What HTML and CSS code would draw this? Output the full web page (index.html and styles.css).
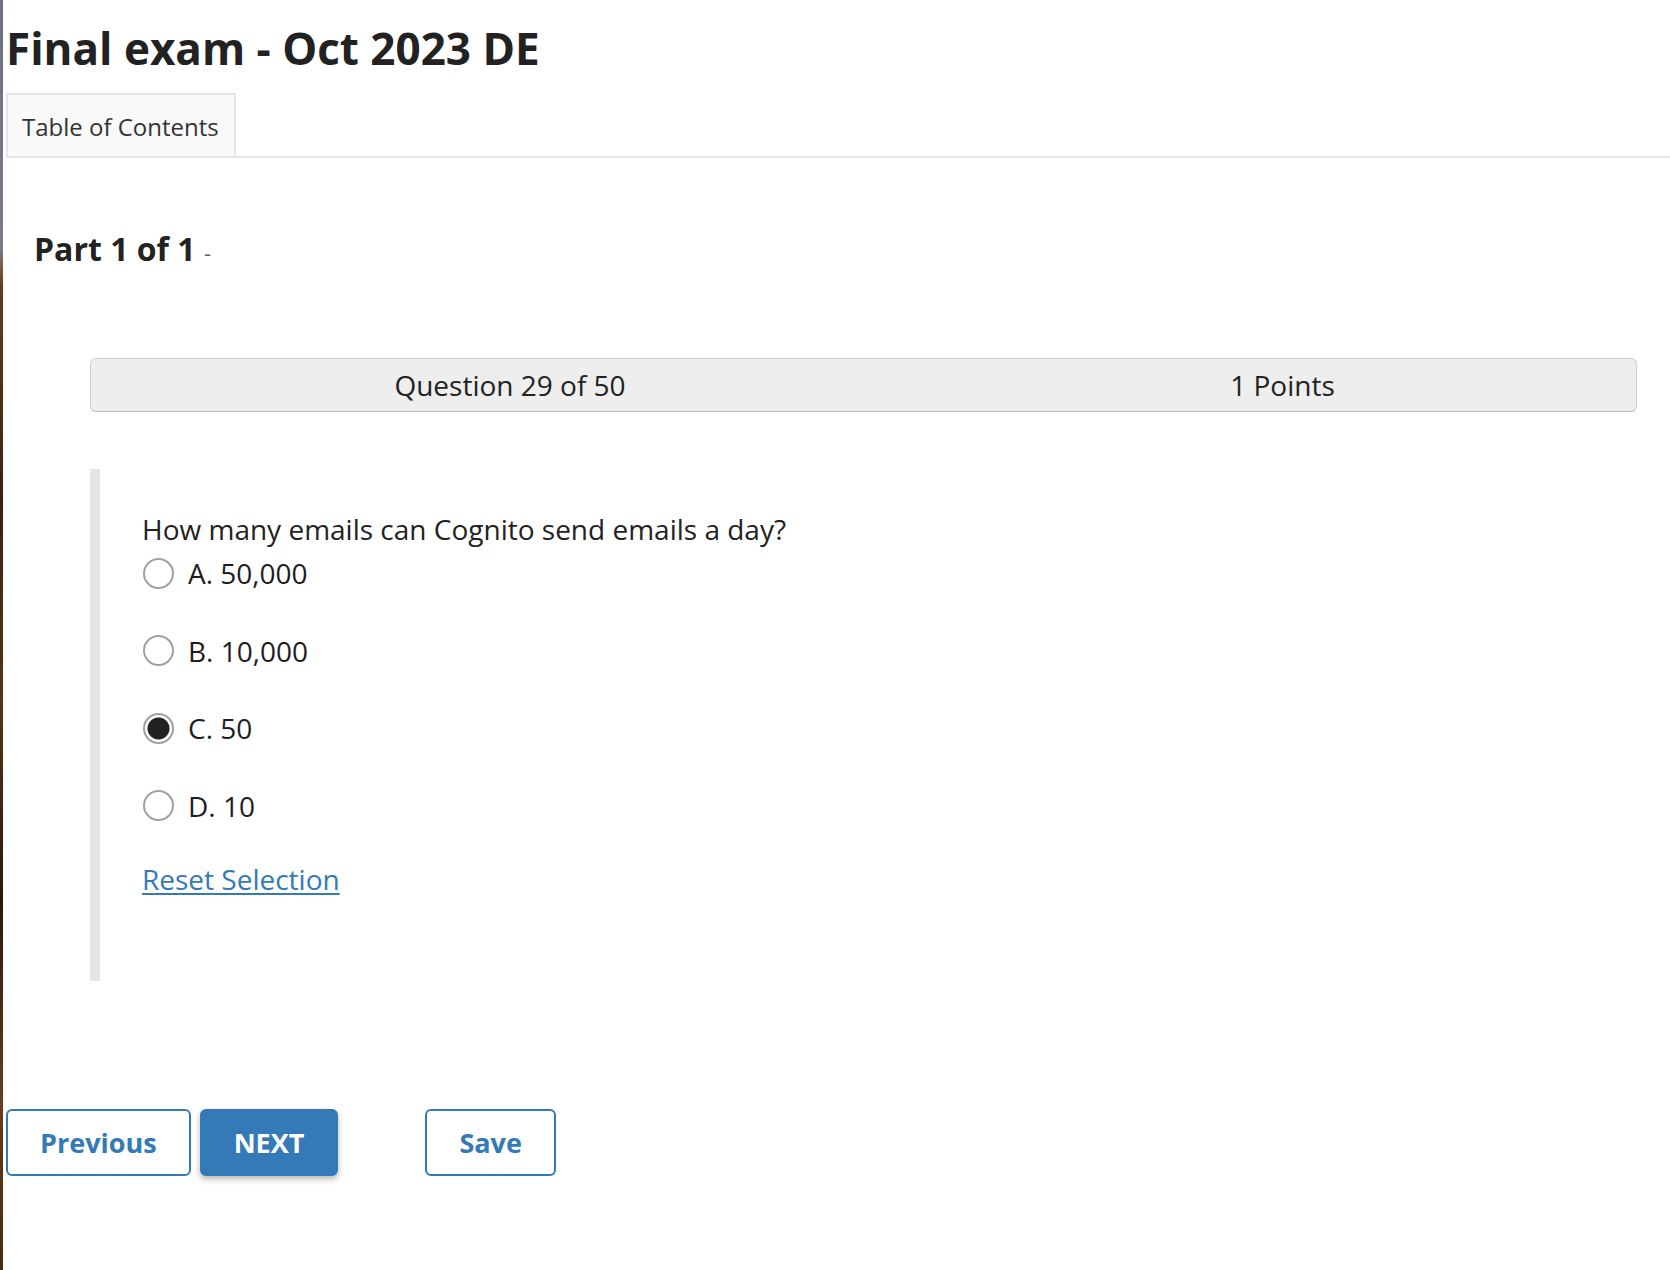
FILE: index.html
```html
<!DOCTYPE html>
<html lang="en">
<head>
<meta charset="utf-8">
<title>Final exam - Oct 2023 DE</title>
<link rel="stylesheet" href="styles.css">
</head>
<body>
<div class="desk-edge"></div>
<main class="page">
  <h1 class="exam-title">Final exam - Oct 2023 DE</h1>
  <nav class="tabs">
    <div class="tab">Table of Contents</div>
  </nav>
  <h2 class="part-title">Part 1 of 1 <span class="part-dash">-</span></h2>
  <div class="q-header">
    <div class="q-header-cell">Question 29 of 50</div>
    <div class="q-header-cell">1 Points</div>
  </div>
  <section class="q-block">
    <p class="q-text">How many emails can Cognito send emails a day?</p>
    <div class="options">
      <label class="option"><input class="radio" type="radio" name="q29"><span class="opt-label">A. 50,000</span></label>
      <label class="option"><input class="radio" type="radio" name="q29"><span class="opt-label">B. 10,000</span></label>
      <label class="option"><input class="radio" type="radio" name="q29" checked><span class="opt-label">C. 50</span></label>
      <label class="option"><input class="radio" type="radio" name="q29"><span class="opt-label">D. 10</span></label>
    </div>
    <a class="reset-link" href="#">Reset Selection</a>
  </section>
  <div class="nav-buttons">
    <button class="btn btn-outline" type="button">Previous</button>
    <button class="btn btn-primary" type="button">NEXT</button>
    <button class="btn btn-outline btn-save" type="button">Save</button>
  </div>
</main>
</body>
</html>
```
FILE: styles.css
```css
html, body {
  margin: 0;
  padding: 0;
  background: #ffffff;
}
body {
  display: flex;
  min-height: 1270px;
  font-family: "Open Sans", "Liberation Sans", sans-serif;
  color: #222222;
}
.desk-edge {
  width: 3px;
  flex: 0 0 3px;
  background: linear-gradient(to bottom, #6c7283 0, #777b8a 250px, #7a5a45 268px, #6a3a1c 285px, #3c2010 500px, #5a3218 700px, #2a160a 900px, #6a3c1e 1100px, #4a2812 1270px);
}
.page {
  flex: 1;
  padding-left: 3px;
  display: flex;
  flex-direction: column;
}
.exam-title {
  margin: 20px 0 0 0;
  font-size: 44px;
  line-height: 56px;
  font-weight: 700;
  color: #222222;
}
.tabs {
  margin-top: 17px;
  display: flex;
  border-bottom: 2px solid #e6e6e6;
}
.tab {
  border: 2px solid #e6e6e6;
  border-bottom: 0;
  background: #f9f9f9;
  padding: 16px 15px 13px 14px;
  font-size: 24px;
  line-height: 32px;
  color: #333333;
}
.part-title {
  margin: 71px 0 0 0;
  padding-left: 28px;
  font-size: 32px;
  line-height: 40px;
  font-weight: 700;
  color: #222222;
}
.part-dash {
  font-size: 22px;
  font-weight: 400;
  color: #666666;
}
.q-header {
  margin: 86px 33px 0 84px;
  height: 54px;
  box-sizing: border-box;
  border: 1px solid #cfcfcf;
  border-bottom-color: #bdbdbd;
  border-radius: 6px;
  background: #eeeeee;
  display: grid;
  grid-template-columns: 838px 1fr;
  font-size: 28px;
  line-height: 52px;
  color: #222222;
}
.q-header-cell {
  text-align: center;
}
.q-block {
  margin: 57px 0 0 84px;
  border-left: 10px solid #e5e5e5;
  padding: 40px 0 82px 42px;
  display: flex;
  flex-direction: column;
  align-items: flex-start;
  font-size: 28px;
  line-height: 40px;
}
.q-text {
  margin: 0;
}
.options {
  margin-top: 4px;
  display: flex;
  flex-direction: column;
  gap: 37.5px;
}
.option {
  display: flex;
  align-items: center;
  height: 40px;
  gap: 14px;
  padding-left: 1px;
}
.radio {
  appearance: none;
  -webkit-appearance: none;
  margin: 0;
  width: 31px;
  height: 31px;
  box-sizing: border-box;
  border: 2px solid #a0a0a0;
  border-radius: 50%;
  background: #ffffff;
}
.radio:checked {
  background: radial-gradient(circle, #222222 0, #222222 10.5px, #ffffff 11.5px);
}
.opt-label {
  color: #1e1e1e;
}
.reset-link {
  margin-top: 33.5px;
  color: #337ab7;
  text-decoration: underline;
  text-underline-offset: 3px;
  text-decoration-thickness: 2px;
}
.nav-buttons {
  margin-top: 128px;
  display: flex;
  align-items: flex-start;
}
.btn {
  height: 67px;
  box-sizing: border-box;
  padding: 0 32px;
  border: 2px solid #337ab7;
  border-radius: 6px;
  font-family: "Open Sans", "Liberation Sans", sans-serif;
  font-size: 27px;
  font-weight: 700;
  line-height: 1;
}
.btn-outline {
  background: #ffffff;
  color: #337ab7;
}
.btn-primary {
  margin-left: 9px;
  background: #337ab7;
  color: #ffffff;
  box-shadow: 0 3px 6px rgba(0, 0, 0, 0.3);
}
.btn-save {
  margin-left: 87px;
}
```
